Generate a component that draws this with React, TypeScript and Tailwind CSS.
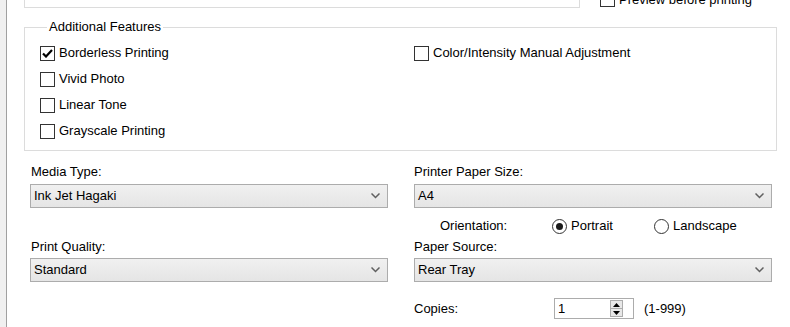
import React from "react";

function Check({ checked }: { checked?: boolean }) {
  return (
    <span className="flex h-[15px] w-[15px] shrink-0 items-center justify-center border border-[#333333] bg-white">
      {checked && (
        <svg width="11" height="9" viewBox="0 0 11 9">
          <path d="M1 4.5 L4 7.5 L10 1" fill="none" stroke="#000" strokeWidth="2.2" />
        </svg>
      )}
    </span>
  );
}

function CheckRow({ label, checked }: { label: string; checked?: boolean }) {
  return (
    <div className="flex h-[26px] items-center gap-[4px]">
      <Check checked={checked} />
      <span>{label}</span>
    </div>
  );
}

function Radio({ label, checked }: { label: string; checked?: boolean }) {
  return (
    <div className="flex items-center gap-[4px]">
      <span className="flex h-[15px] w-[15px] items-center justify-center rounded-full border border-[#333333] bg-white">
        {checked && <span className="h-[7px] w-[7px] rounded-full bg-[#1a1a1a]" />}
      </span>
      <span>{label}</span>
    </div>
  );
}

function Select({ value }: { value: string }) {
  return (
    <div className="flex h-[24px] items-center justify-between border border-[#acacac] bg-gradient-to-b from-[#f0f0f0] to-[#e5e5e5] pl-[3px] pr-[7px]">
      <span>{value}</span>
      <svg width="9" height="6" viewBox="0 0 9 6">
        <path d="M0.5 0.5 L4.5 4.5 L8.5 0.5" fill="none" stroke="#606060" strokeWidth="1.5" />
      </svg>
    </div>
  );
}

export default function App() {
  return (
    <div className="flex h-[327px] w-[790px] overflow-hidden bg-white font-['Liberation_Sans',Arial,sans-serif] text-[13px] text-black">
      <div className="w-[6px] bg-[#f0f0f0]" />
      <div className="w-px bg-[#a0a0a0]" />
      <div className="flex-1 pl-[17px]">
        {/* tail of the section above */}
        <div className="flex h-[8px]">
          <div className="h-[8px] w-[556px] border-x border-b border-[#dcdcdc]" />
          <div className="ml-[20px] -mt-[9px] flex items-center gap-[4px]">
            <Check />
            <span>Preview before printing</span>
          </div>
        </div>

        <fieldset className="mt-[11px] h-[132px] w-[753px] border border-[#dcdcdc] pl-[15px]">
          <legend className="ml-[7px] px-[2px] leading-[16px]">Additional Features</legend>
          <div className="mt-[5px] flex">
            <div className="w-[374px]">
              <CheckRow label="Borderless Printing" checked />
              <CheckRow label="Vivid Photo" />
              <CheckRow label="Linear Tone" />
              <CheckRow label="Grayscale Printing" />
            </div>
            <div>
              <CheckRow label="Color/Intensity Manual Adjustment" />
            </div>
          </div>
        </fieldset>

        <div className="mt-[11px] flex">
          <div className="ml-[6px] flex w-[358px] flex-col">
            <div className="h-[20px] pl-[1px] leading-[20px]">Media Type:</div>
            <div className="mt-[2px]">
              <Select value="Ink Jet Hagaki" />
            </div>
            <div className="mt-[29px] h-[20px] pl-[1px] leading-[20px]">Print Quality:</div>
            <div className="mt-[1px]">
              <Select value="Standard" />
            </div>
          </div>
          <div className="ml-[26px] flex w-[358px] flex-col">
            <div className="h-[20px] leading-[20px]">Printer Paper Size:</div>
            <div className="mt-[2px]">
              <Select value="A4" />
            </div>
            <div className="mt-[8px] flex h-[20px] items-center">
              <span className="ml-[26px] w-[112px]">Orientation:</span>
              <div className="w-[102px]">
                <Radio label="Portrait" checked />
              </div>
              <Radio label="Landscape" />
            </div>
            <div className="mt-px h-[20px] leading-[20px]">Paper Source:</div>
            <div className="mt-[1px]">
              <Select value="Rear Tray" />
            </div>
            <div className="mt-[16px] flex h-[21px] items-center">
              <span className="w-[140px]">Copies:</span>
              <div className="flex h-[21px] w-[80px] items-center justify-between border border-[#acacac] bg-white pl-[3px]">
                <span>1</span>
                <div className="mr-[10px] flex h-[17px] w-[13px] flex-col border border-[#acacac]">
                  <div className="flex flex-1 items-center justify-center border-b border-[#acacac] bg-[#e8e8e8]">
                    <svg width="7" height="4" viewBox="0 0 7 4">
                      <path d="M0 4 L3.5 0 L7 4 Z" fill="#000" />
                    </svg>
                  </div>
                  <div className="flex flex-1 items-center justify-center bg-[#e8e8e8]">
                    <svg width="7" height="4" viewBox="0 0 7 4">
                      <path d="M0 0 L3.5 4 L7 0 Z" fill="#000" />
                    </svg>
                  </div>
                </div>
              </div>
              <span className="ml-[10px]">(1-999)</span>
            </div>
          </div>
        </div>
      </div>
    </div>
  );
}
